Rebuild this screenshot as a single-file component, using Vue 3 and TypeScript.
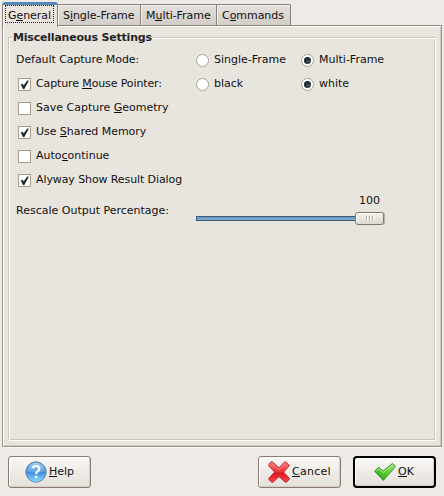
<script setup lang="ts">
import { ref } from 'vue'

interface Label { pre: string; key: string; post: string }
interface Option { label: Label; checked: boolean }

const tabs: Label[] = [
  { pre: 'G', key: 'e', post: 'neral' },
  { pre: 'S', key: 'i', post: 'ngle-Frame' },
  { pre: 'M', key: 'u', post: 'lti-Frame' },
  { pre: 'C', key: 'o', post: 'mmands' },
]
const active = ref(0)
const options = ref<Option[]>([
  { label: { pre: 'Capture ', key: 'M', post: 'ouse Pointer:' }, checked: true },
  { label: { pre: 'Save Capture ', key: 'G', post: 'eometry' }, checked: false },
  { label: { pre: 'Use ', key: 'S', post: 'hared Memory' }, checked: true },
  { label: { pre: 'Auto', key: 'c', post: 'ontinue' }, checked: false },
  { label: { pre: 'Alyway Show Result Dialog', key: '', post: '' }, checked: true },
])
const mode = ref('Multi-Frame')
const pointer = ref('white')
const scale = ref(100)
</script>

<template>
  <main class="dialog">
    <nav class="tabs">
      <div v-for="(t, i) in tabs" :key="i" class="tab" :class="['tab-' + i, { active: i === active }]" @click="active = i">
        <span class="tab-text">{{ t.pre }}<u>{{ t.key }}</u>{{ t.post }}</span>
      </div>
    </nav>
    <section class="panel">
      <fieldset class="group">
        <legend>Miscellaneous Settings</legend>
        <div class="row">
          <span class="caption mode-caption">Default Capture Mode:</span>
          <div class="radios">
            <label v-for="m in ['Single-Frame', 'Multi-Frame']" :key="m" class="choice" @click="mode = m">
              <i class="radio" :class="{ on: mode === m }"></i><span>{{ m }}</span>
            </label>
          </div>
        </div>
        <div v-for="(o, i) in options" :key="i" class="row">
          <div class="check" @click="o.checked = !o.checked">
            <i class="box">
              <svg v-if="o.checked" width="9" height="9" viewBox="0 0 9 9"><path d="M.7 4.2 2.5 3.7 3.7 5.2 7.2.6 8.8.8 4.4 8.9H2.9Z" fill="#222c35" /></svg>
            </i>
            <span :class="'opt-' + i">{{ o.label.pre }}<u v-if="o.label.key">{{ o.label.key }}</u>{{ o.label.post }}</span>
          </div>
          <div v-if="i === 0" class="radios">
            <label v-for="p in ['black', 'white']" :key="p" class="choice" @click="pointer = p">
              <i class="radio" :class="{ on: pointer === p }"></i><span>{{ p }}</span>
            </label>
          </div>
        </div>
        <div class="scale-row">
          <span class="caption">Rescale Output Percentage:</span>
          <div class="scale">
            <span class="value">{{ scale }}</span>
            <div class="slider">
              <div class="track"></div>
              <div class="thumb"><i></i><i></i><i></i></div>
            </div>
          </div>
        </div>
      </fieldset>
    </section>
    <footer class="actions">
      <button class="btn help">
        <svg width="22" height="22" viewBox="0 0 22 22">
          <defs>
            <linearGradient id="helpFill" x1="0" y1="0" x2="0" y2="1">
              <stop offset="0" stop-color="#5b9ddd" /><stop offset=".5" stop-color="#3b86db" /><stop offset="1" stop-color="#8ee4ff" />
            </linearGradient>
            <linearGradient id="helpShine" x1="0" y1="0" x2="0" y2="1">
              <stop offset="0" stop-color="#d7edfb" /><stop offset="1" stop-color="#70afe6" />
            </linearGradient>
          </defs>
          <circle cx="11" cy="11" r="10.2" fill="url(#helpFill)" stroke="#6587ad" stroke-width="1" />
          <path d="M2 10.5A9 9 0 0 1 20 10.5Q11 13 2 10.5Z" fill="url(#helpShine)" opacity=".6" />
          <path d="M7.7 7.3Q8.2 5 11 5 14.3 5 14.3 7.9 14.3 9.4 12.6 10.4 11.1 11.3 11.1 13" fill="none" stroke="#fff" stroke-width="2.2" />
          <circle cx="11.1" cy="15.9" r="1.4" fill="#fff" />
        </svg>
        <span><u>H</u>elp</span>
      </button>
      <button class="btn cancel">
        <svg width="22" height="22" viewBox="0 0 22 22">
          <defs>
            <linearGradient id="crossFill" x1="0" y1="0" x2="0" y2="1">
              <stop offset="0" stop-color="#ff8180" /><stop offset=".48" stop-color="#ef3338" /><stop offset=".55" stop-color="#dc1720" /><stop offset="1" stop-color="#fb454d" />
            </linearGradient>
          </defs>
          <path d="M4.2.8 11 6.8 16.4 1.2Q17.1.4 18 1.2L20.9 4Q21.5 4.8 20.7 5.5L15.5 11.1 21.1 17.1Q21.7 18 20.9 18.8L18.7 20.9Q17.8 21.7 17 20.9L11 15.6 5.1 21Q4.2 21.7 3.4 20.9L1 18.7Q.4 17.9 1.2 17L6.6 11.1.9 5Q.2 4.2 1 3.4L3 1Q3.6.4 4.2.8Z" fill="url(#crossFill)" stroke="#b7242b" />
          <path d="M3.8 2.5 11 8.7 17.2 2.7" fill="none" stroke="#ffb0ad" stroke-width="1" opacity=".55" />
        </svg>
        <span><u>C</u>ancel</span>
      </button>
      <button class="btn ok">
        <svg width="22" height="22" viewBox="0 0 22 22">
          <defs>
            <linearGradient id="tickFill" x1="1" y1="0" x2="0" y2="1">
              <stop offset="0" stop-color="#a9e891" /><stop offset=".5" stop-color="#56ce31" /><stop offset="1" stop-color="#229f12" />
            </linearGradient>
          </defs>
          <path d="M.6 10.2 4.6 6.3 9.2 10 18.4 2.5 21.5 5.5 9.3 19.4Z" fill="url(#tickFill)" stroke="#3c8d2c" stroke-linejoin="round" />
          <path d="M2.2 10.2 4.7 7.8 9.2 11.5 18.2 4.1" fill="none" stroke="#d0f6bd" opacity=".75" />
        </svg>
        <span><u>O</u>K</span>
      </button>
    </footer>
  </main>
</template>

<style>
body { margin: 0; background: #eeebe6; }
</style>

<style scoped>
* { box-sizing: border-box; }
.dialog { width: 444px; height: 496px; padding: 2px 2px 0; display: flex; flex-direction: column; background: #eeebe6; color: #111; font: 11px/15px "DejaVu Sans", sans-serif; white-space: pre; overflow: hidden; }
u { text-decoration: none; box-shadow: 0 1px 0 #111; display: inline-block; height: 12px; vertical-align: top; }
.tabs { display: flex; align-items: flex-end; height: 23px; }
.tab { height: 21px; border: 1px solid #8a8078; border-left-width: 0; border-bottom: 0; background: linear-gradient(#e4e0dc, #d2cdc7); box-shadow: inset 1px 1px #f3f0ed; padding: 3px 0 0 5px; letter-spacing: -.05px; }
.tab-0 { width: 56px; }
.tab-1 { width: 83px; }
.tab-2 { width: 76px; }
.tab-3 { width: 74px; border-radius: 0 2px 0 0; }
.tab.active { position: relative; height: 25px; margin-bottom: -2px; border-left-width: 1px; border-top: 3px solid #5487b5; border-radius: 3px 3px 0 0; background: #e9e4de; padding: 0; box-shadow: inset 1px 0 #fff; }
.tab.active .tab-text { display: block; margin: 0 3px 0 2px; height: 18px; border: 1px dotted #222; padding: 1px 0 0 2px; line-height: 17px; }
.tab.active u { height: 13px; }
.panel { width: 440px; height: 422px; border: 1px solid #a0958c; border-top-color: #91877e; box-shadow: inset 1px 1px #fff, inset -1px -1px #d2c8c0, 0 1px #faf8f6; background: #e8e4de; padding: 11px 6px 6px 5px; }
.group { position: relative; margin: 0; width: 428px; height: 404px; min-width: 0; padding: 9px 0 0 7px; border: 1px solid #cbc4bc; border-right-color: #fff; border-bottom-color: #fff; box-shadow: inset 1px 1px #fff, inset -1px -1px #cbc4bc; }
legend { position: absolute; left: 3px; top: -8px; padding: 0 1px; background: #e8e4de; font-weight: bold; letter-spacing: -.2px; color: #252525; }
.row { display: flex; height: 24px; padding-top: 5px; }
.caption { width: 180px; }
.mode-caption { letter-spacing: -.07px; }
.opt-0 { letter-spacing: -.12px; }
.opt-2 { letter-spacing: -.05px; }
.opt-4 { letter-spacing: -.1px; }
.check { display: flex; width: 180px; padding-left: 2px; }
.box { width: 13px; height: 13px; border: 1px solid #a99b8e; background: #fff; margin: 2px 5px 0 0; padding: 1px; display: flex; }
.radios { display: flex; }
.choice { display: flex; width: 105px; }
.radio { display: flex; width: 13px; height: 13px; border: 1px solid #aaa096; border-radius: 50%; background: #fff; margin: 2px 5px 0 0; }
.radio.on::after { content: ""; width: 7px; height: 7px; margin: 2px; border-radius: 50%; background: radial-gradient(circle at 60% 65%, #465968, #18222c 60%); }
.scale-row { display: flex; padding-top: 12px; }
.scale { width: 189px; margin-top: -10px; }
.value { display: block; padding-left: 163px; }
.slider { height: 13px; margin-top: 4px; display: flex; align-items: center; }
.track { width: 159px; height: 5px; border: 1px solid #3d5a76; border-right: 0; background: linear-gradient(#6695c2, #81acd2); }
.thumb { width: 29px; height: 13px; border: 1px solid #81766d; border-radius: 3px; background: linear-gradient(#f5f2ee, #ddd7d0); box-shadow: inset 1px 1px #fff, 1px 0 #b9aea4; display: flex; justify-content: center; align-items: center; gap: 1px; }
.thumb i { width: 2px; height: 5px; border-left: 1px solid #b6ada5; border-right: 1px solid #fff; }
.actions { display: flex; padding: 9px 6px 0; }
.btn { display: flex; align-items: center; width: 83px; height: 32px; border: 1px solid #897d73; border-radius: 3px; background: linear-gradient(#fbf9f7, #eeebe7 50%, #e5e0da); padding: 0; color: #111; font: inherit; line-height: 14px; box-shadow: inset 1px 1px #fff, inset -1px -1px #d6cec6; }
.btn svg { flex: none; margin-right: 2px; }
.btn u { height: 11px; }
.help { padding-left: 16px; }
.cancel { margin-left: 167px; padding-left: 9px; }
.cancel span { letter-spacing: .25px; }
.ok { margin-left: 12px; border: 2px solid #000; border-radius: 4px; padding-left: 19px; }
</style>
